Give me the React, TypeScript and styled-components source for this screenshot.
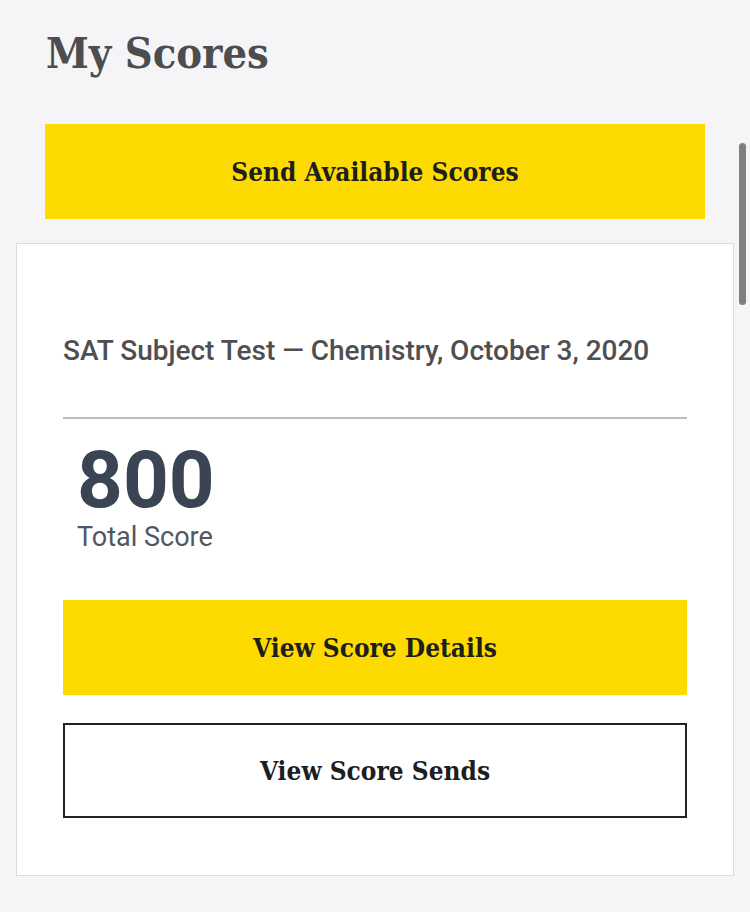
import styled, { createGlobalStyle } from "styled-components";

const GlobalStyle = createGlobalStyle`
  html, body {
    margin: 0;
    padding: 0;
    background: #f5f5f7;
  }
  body {
    font-family: Roboto, "Liberation Sans", sans-serif;
  }
`;

const Page = styled.div`
  position: relative;
  min-height: 912px;
  padding: 25px 16px 0;
  box-sizing: border-box;
`;

const Heading = styled.h1`
  margin: 0 0 0 30px;
  font-family: "DejaVu Serif", "Liberation Serif", serif;
  font-stretch: condensed;
  font-weight: 700;
  font-size: 43px;
  line-height: 56px;
  color: #4d4d4f;
`;

const SendRow = styled.div`
  padding: 43px 29px 0;
  margin-bottom: 24px;
`;

interface ButtonProps {
  $variant?: "primary" | "outline";
}

const Button = styled.button<ButtonProps>`
  display: flex;
  align-items: center;
  justify-content: center;
  width: 100%;
  height: 95px;
  margin: 0;
  padding: 0;
  box-sizing: border-box;
  font-family: "DejaVu Serif", "Liberation Serif", serif;
  font-stretch: condensed;
  font-weight: 700;
  font-size: 26px;
  color: #1e1e1e;
  cursor: pointer;
  background: ${(p) => (p.$variant === "outline" ? "#ffffff" : "#fedb00")};
  border: ${(p) => (p.$variant === "outline" ? "2px solid #222" : "none")};
`;

const Card = styled.section`
  background: #ffffff;
  border: 1px solid #dcdcdc;
  padding: 90px 46px 57px;
`;

const CardTitle = styled.h2`
  margin: 0;
  font-family: Roboto, "Liberation Sans", sans-serif;
  font-weight: 500;
  font-size: 28px;
  line-height: 34px;
  color: #4f4f51;
`;

const Divider = styled.hr`
  margin: 49px 0 0;
  border: none;
  border-top: 2px solid #bdbdbd;
`;

const ScoreBlock = styled.div`
  display: flex;
  flex-direction: column;
  padding: 21px 0 0 14px;
`;

const ScoreValue = styled.div`
  font-family: Roboto, "Liberation Sans", sans-serif;
  font-weight: 700;
  font-size: 80px;
  line-height: 80px;
  color: #3a4452;
`;

const ScoreLabel = styled.div`
  font-family: Roboto, "Liberation Sans", sans-serif;
  font-weight: 400;
  font-size: 27px;
  line-height: 34px;
  color: #4f5762;
`;

const Actions = styled.div`
  display: flex;
  flex-direction: column;
  gap: 28px;
  margin-top: 46px;
`;

const ScrollThumb = styled.div`
  position: absolute;
  right: 4px;
  top: 143px;
  width: 7px;
  height: 162px;
  border-radius: 4px;
  background: #7f7f80;
`;

export default function App() {
  return (
    <>
      <GlobalStyle />
      <Page>
        <Heading>My Scores</Heading>
        <SendRow>
          <Button>Send Available Scores</Button>
        </SendRow>
        <Card>
          <CardTitle>SAT Subject Test — Chemistry, October 3, 2020</CardTitle>
          <Divider />
          <ScoreBlock>
            <ScoreValue>800</ScoreValue>
            <ScoreLabel>Total Score</ScoreLabel>
          </ScoreBlock>
          <Actions>
            <Button>View Score Details</Button>
            <Button $variant="outline">View Score Sends</Button>
          </Actions>
        </Card>
        <ScrollThumb />
      </Page>
    </>
  );
}
